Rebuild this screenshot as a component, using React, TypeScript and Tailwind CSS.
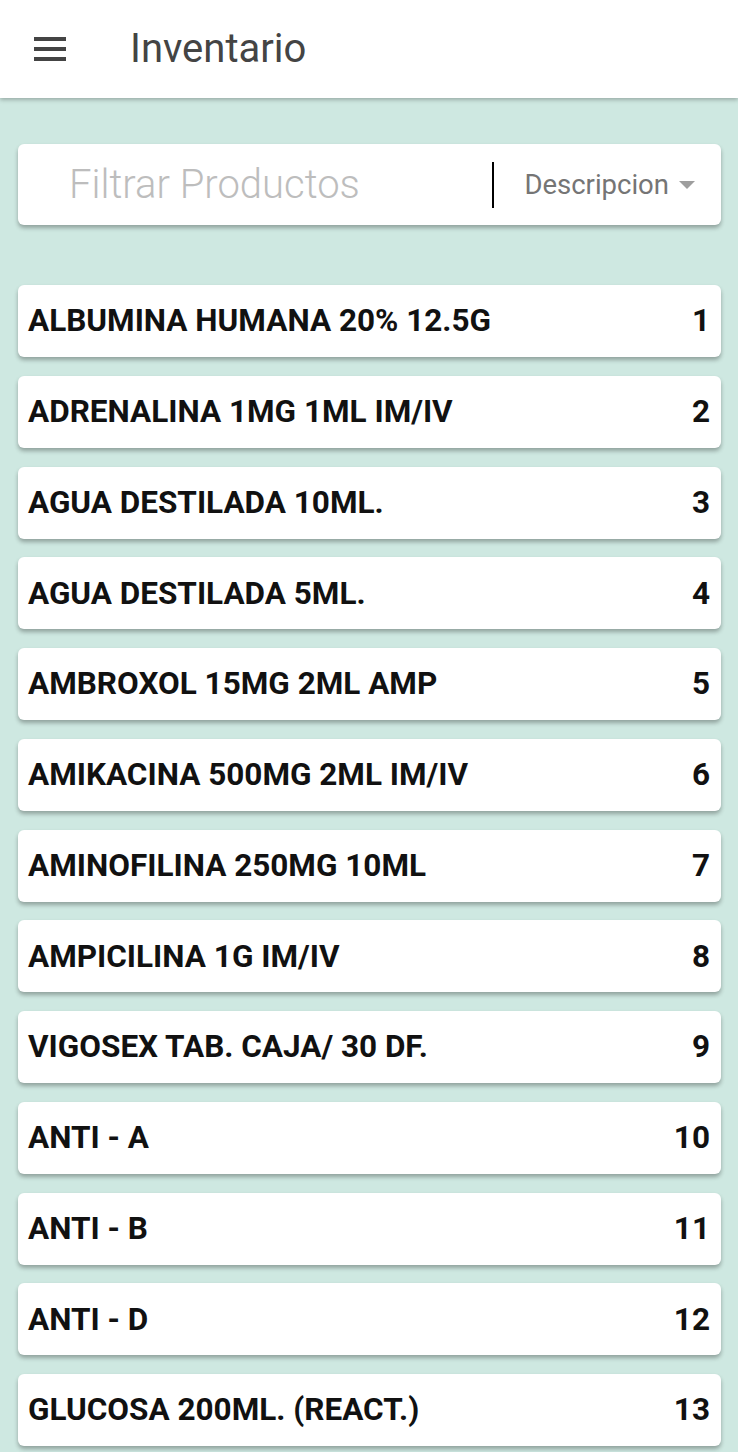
const items = [
  "ALBUMINA HUMANA 20% 12.5G",
  "ADRENALINA 1MG 1ML IM/IV",
  "AGUA DESTILADA 10ML.",
  "AGUA DESTILADA 5ML.",
  "AMBROXOL 15MG 2ML AMP",
  "AMIKACINA 500MG 2ML IM/IV",
  "AMINOFILINA 250MG 10ML",
  "AMPICILINA 1G IM/IV",
  "VIGOSEX TAB. CAJA/ 30 DF.",
  "ANTI - A",
  "ANTI - B",
  "ANTI - D",
  "GLUCOSA 200ML. (REACT.)",
];

export default function App() {
  return (
    <div className="min-h-[1452px] bg-[#cee8e1] font-['Roboto',sans-serif] overflow-hidden">
      {/* Toolbar */}
      <header className="h-[98px] bg-white flex items-center shadow-[0_2px_4px_rgba(0,0,0,0.25)] relative z-10">
        <div className="w-[32px] ml-[34px] flex flex-col gap-[6px]">
          <span className="h-[4px] bg-[#444]" />
          <span className="h-[4px] bg-[#444]" />
          <span className="h-[4px] bg-[#444]" />
        </div>
        <h1 className="ml-[64px] text-[40px] text-[#444] leading-none">Inventario</h1>
      </header>

      <main className="pl-[18px] pr-[17px] pt-[46px] pb-6">
        {/* Filter */}
        <div className="h-[81px] bg-white rounded-[6px] shadow-[0_3px_4px_rgba(0,0,0,0.3)] flex items-center">
          <input
            className="flex-1 min-w-0 pl-[51px] text-[40px] font-light text-[#444] placeholder:text-[#bdbdbd] outline-none bg-transparent"
            placeholder="Filtrar Productos"
          />
          <div className="w-[2px] h-[46px] bg-black" />
          <div className="flex items-center pl-[30px] pr-[26px]">
            <span className="text-[27.5px] text-[#757575]">Descripcion</span>
            <svg width="16" height="8" viewBox="0 0 16 8" className="ml-[10px]">
              <path d="M0 0h16L8 8z" fill="#9e9e9e" />
            </svg>
          </div>
        </div>

        {/* List */}
        <ul className="mt-[60px] flex flex-col gap-[18.75px]">
          {items.map((name, i) => (
            <li
              key={i}
              className="h-[72px] bg-white rounded-[6px] shadow-[0_3px_4px_rgba(0,0,0,0.3)] flex items-center justify-between pl-[10px] pr-[11px]"
            >
              <span className="text-[31.5px] font-bold text-[#111]">{name}</span>
              <span className="text-[31.5px] font-bold text-[#111]">{i + 1}</span>
            </li>
          ))}
        </ul>
      </main>
    </div>
  );
}
